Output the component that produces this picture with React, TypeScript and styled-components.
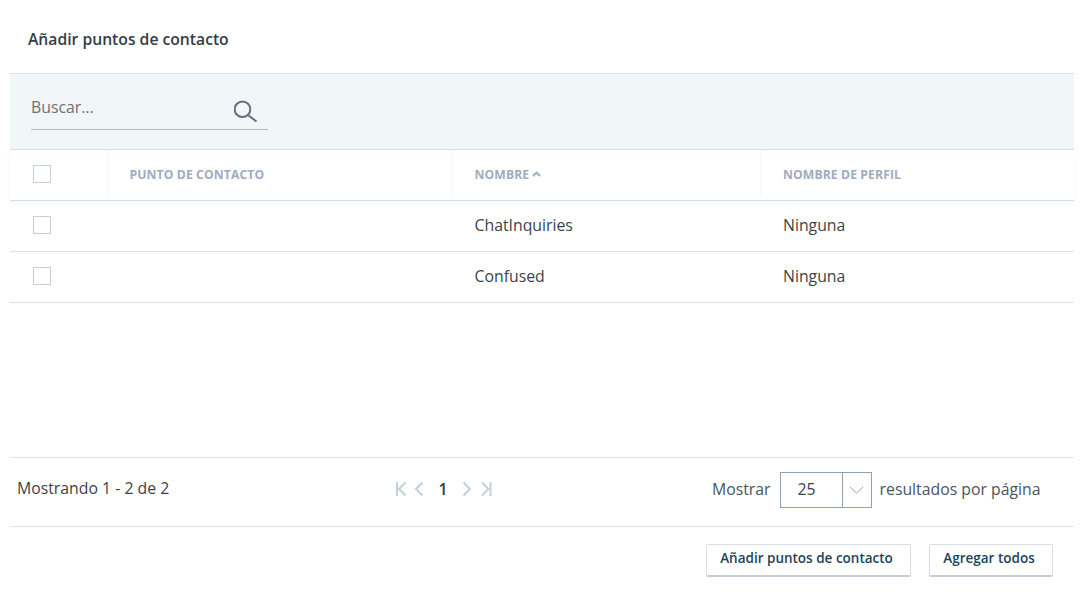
import * as React from 'react';
import styled, {createGlobalStyle} from 'styled-components';

const GlobalStyle = createGlobalStyle`
  html, body {
    margin: 0;
    padding: 0;
    background: #fff;
    font-family: 'Open Sans', sans-serif;
  }
`;

const Page = styled.div`
  width: 1086px;
  height: 596px;
  padding: 0 12px 0 10px;
  box-sizing: border-box;
  overflow: hidden;
`;

const Title = styled.h2`
  margin: 0;
  height: 73px;
  padding: 29px 0 0 18px;
  box-sizing: border-box;
  font-size: 15.7px;
  line-height: 20px;
  font-weight: 600;
  color: #333e48;
`;

const SearchBar = styled.div`
  height: 77px;
  box-sizing: border-box;
  background: #f1f6f9;
  border-top: 1px solid #d9e2e9;
  border-bottom: 1px solid #d9e2e9;
  padding: 15px 0 0 21px;
`;

const SearchField = styled.div`
  width: 237px;
  height: 41px;
  box-sizing: border-box;
  display: flex;
  align-items: flex-start;
  justify-content: space-between;
  border-bottom: 1px solid #b0bcc6;
  padding: 8px 10px 0 0;
`;

const SearchText = styled.span`
  font-size: 15.8px;
  line-height: 20px;
  color: #6f7070;
`;

const SearchIcon = styled.svg`
  width: 24px;
  height: 24px;
  margin-top: 2px;
  fill: none;
  stroke: #5f6f7c;
  stroke-width: 2;
`;

const Row = styled.div<{$head?: boolean}>`
  display: grid;
  grid-template-columns: 96.5px 345px 308.5px 1fr;
  height: 51px;
  box-sizing: border-box;
  padding-bottom: 2px;
  border-bottom: 1px solid ${p => (p.$head ? '#d5dfe8' : '#d9e2e9')};
  ${p => p.$head && 'box-shadow: 0 3px 5px rgba(120, 140, 160, 0.08);'}
`;

const HeadCell = styled.div<{$divider?: boolean}>`
  display: flex;
  align-items: center;
  gap: 3px;
  padding-left: 22px;
  font-size: 12.2px;
  font-weight: 700;
  letter-spacing: 0.1px;
  color: #a1abbd;
  ${p => p.$divider && 'border-left: 1px solid #f6f7f9;'}
`;

const BoxCell = styled.div`
  display: flex;
  align-items: center;
  padding-left: 23px;
`;

const Check = styled.span`
  width: 18px;
  height: 18px;
  box-sizing: border-box;
  background: #fff;
  border: 1px solid #c5d1da;
`;

const Cell = styled.div`
  display: flex;
  align-items: center;
  padding-left: 23px;
  font-size: 15.8px;
  color: #3c4348;
`;

const Spacer = styled.div`
  height: 154px;
`;

const Pager = styled.div`
  height: 70px;
  box-sizing: border-box;
  border-top: 1px solid #e0e6eb;
  border-bottom: 1px solid #e0e6eb;
  display: grid;
  grid-template-columns: 385px 317px 1fr;
  align-items: center;
`;

const Count = styled.div`
  padding: 0 0 8px 7px;
  font-size: 15.8px;
  color: #3c4348;
`;

const PageNav = styled.div`
  display: flex;
  align-items: center;
  height: 20px;
  padding-bottom: 6px;
  color: #c3d0da;
`;

const NavIcon = styled.svg<{$gap?: number}>`
  width: 12px;
  height: 16px;
  margin-right: ${p => p.$gap ?? 0}px;
  fill: none;
  stroke: currentColor;
  stroke-width: 2;
`;

const PageNumber = styled.span`
  width: 12px;
  margin-right: 11px;
  font-size: 15.8px;
  font-weight: 600;
  color: #2f3a44;
  text-align: center;
`;

const PerPage = styled.div`
  display: flex;
  align-items: center;
  font-size: 15.8px;
  color: #4a555e;
  padding-bottom: 6px;
`;

const Select = styled.div`
  width: 92px;
  height: 36px;
  box-sizing: border-box;
  margin: 1px 8px 0 9px;
  border: 1px solid #8fa3b5;
  display: flex;
`;

const SelectValue = styled.div`
  flex: 1;
  padding-left: 17px;
  line-height: 33px;
  color: #3c4348;
`;

const SelectArrow = styled.div`
  width: 28px;
  border-left: 1px solid #8fa3b5;
  display: flex;
  align-items: center;
  justify-content: center;
`;

const Footer = styled.div`
  display: flex;
  justify-content: flex-end;
  gap: 18px;
  padding: 17px 21px 0 0;
`;

const Button = styled.button<{$width: number}>`
  width: ${p => p.$width}px;
  height: 33px;
  box-sizing: border-box;
  padding: 0 4px 5px 0;
  background: #fff;
  border: 1px solid #d5dfe8;
  border-bottom: 2px solid #c3ced8;
  border-radius: 2px;
  font-family: inherit;
  font-size: 13.5px;
  font-weight: 600;
  color: #23425c;
`;

const Sort = () => (
  <svg width="9" height="6" viewBox="0 0 9 6" fill="none" stroke="#a1abbd" strokeWidth="1.8">
    <path d="M1 5l3.5-3.5L8 5" />
  </svg>
);

export default function App() {
  return (
    <Page>
      <GlobalStyle />
      <Title>Añadir puntos de contacto</Title>
      <SearchBar>
        <SearchField>
          <SearchText>Buscar...</SearchText>
          <SearchIcon viewBox="0 0 24 24">
            <circle cx="8.5" cy="10.3" r="7.8" />
            <path d="M14.5 16.5l8 6" />
          </SearchIcon>
        </SearchField>
      </SearchBar>
      <Row $head>
        <BoxCell><Check /></BoxCell>
        <HeadCell $divider>PUNTO DE CONTACTO</HeadCell>
        <HeadCell $divider>NOMBRE <Sort /></HeadCell>
        <HeadCell $divider>NOMBRE DE PERFIL</HeadCell>
      </Row>
      <Row>
        <BoxCell><Check /></BoxCell>
        <Cell />
        <Cell>ChatInquiries</Cell>
        <Cell>Ninguna</Cell>
      </Row>
      <Row>
        <BoxCell><Check /></BoxCell>
        <Cell />
        <Cell>Confused</Cell>
        <Cell>Ninguna</Cell>
      </Row>
      <Spacer />
      <Pager>
        <Count>Mostrando 1 - 2 de 2</Count>
        <PageNav>
          <NavIcon viewBox="0 0 12 16" $gap={5}><path d="M2 1v14M10.5 1.5L4 8l6.5 6.5" /></NavIcon>
          <NavIcon viewBox="0 0 12 16" $gap={13}><path d="M10.5 1.5L4 8l6.5 6.5" /></NavIcon>
          <PageNumber>1</PageNumber>
          <NavIcon viewBox="0 0 12 16" $gap={8}><path d="M3.5 1.5L10 8l-6.5 6.5" /></NavIcon>
          <NavIcon viewBox="0 0 12 16"><path d="M2 1.5L8.5 8 2 14.5M10.5 1v14" /></NavIcon>
        </PageNav>
        <PerPage>
          Mostrar
          <Select>
            <SelectValue>25</SelectValue>
            <SelectArrow>
              <svg width="15" height="8" viewBox="0 0 15 8" fill="none" stroke="#9aa8b4" strokeWidth="1">
                <path d="M1 1l6.5 6L14 1" />
              </svg>
            </SelectArrow>
          </Select>
          resultados por página
        </PerPage>
      </Pager>
      <Footer>
        <Button $width={205}>Añadir puntos de contacto</Button>
        <Button $width={124}>Agregar todos</Button>
      </Footer>
    </Page>
  );
}
